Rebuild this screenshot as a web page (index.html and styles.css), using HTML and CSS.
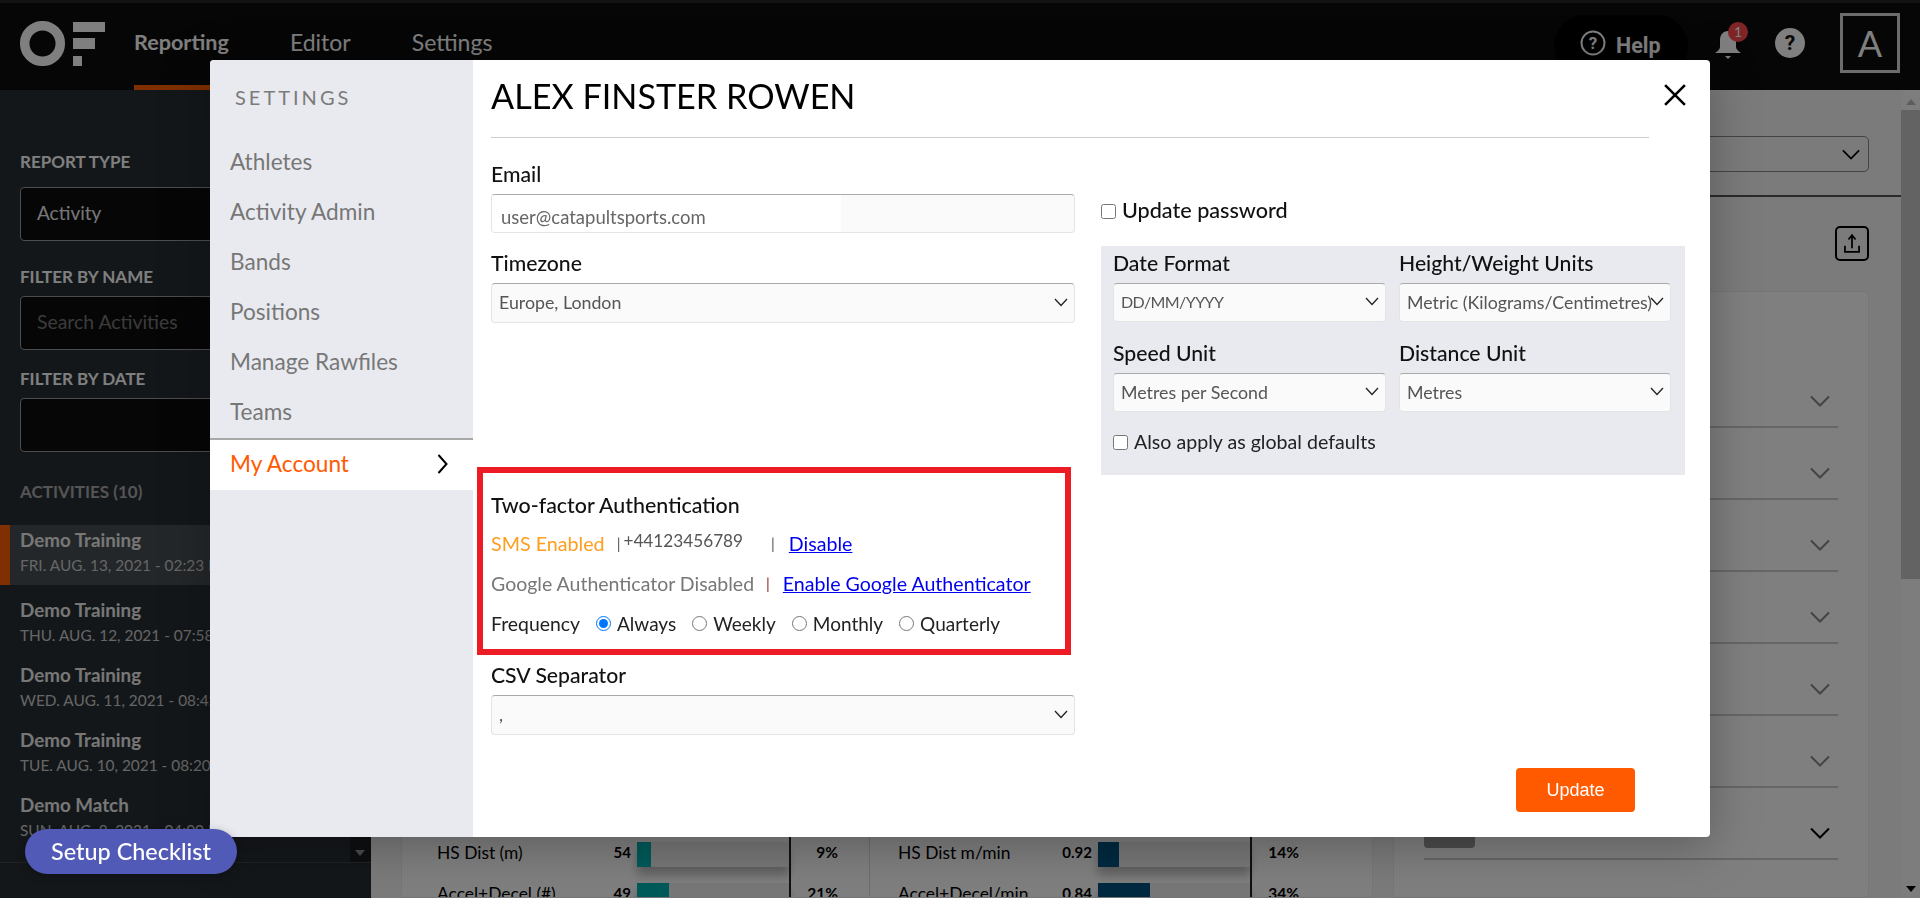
FILE: index.html
```html
<!DOCTYPE html>
<html lang="en">
<head>
<meta charset="utf-8">
<title>Settings - My Account</title>
<link rel="stylesheet" href="styles.css">
</head>
<body>
<svg class="defs" width="0" height="0" aria-hidden="true">
  <symbol id="chev" viewBox="0 0 14 9"><path d="M1 1l6 6.5L13 1" fill="none" stroke="currentColor" stroke-width="1.3"/></symbol>
  <symbol id="chev-big" viewBox="0 0 20 12"><path d="M1 1.5l9 9 9-9" fill="none" stroke="currentColor" stroke-width="2"/></symbol>
</svg>
<div class="app">
  <header class="topbar">
    <svg class="logo" viewBox="0 0 85 45" width="85" height="45" aria-label="OF">
      <circle cx="22.5" cy="22.5" r="17.8" fill="none" stroke="#fff" stroke-width="9.5"/>
      <rect x="53" y="1" width="32" height="10" fill="#fff"/>
      <rect x="53" y="17" width="22" height="11" fill="#fff"/>
      <rect x="53" y="35" width="9" height="10" fill="#fff"/>
    </svg>
    <nav class="nav">
      <a class="nav-item nav-active">Reporting</a>
      <a class="nav-item">Editor</a>
      <a class="nav-item">Settings</a>
    </nav>
    <div class="top-actions">
      <div class="help-pill">
        <svg viewBox="0 0 26 26" width="26" height="26"><circle cx="13" cy="13" r="11.5" fill="none" stroke="#fff" stroke-width="2"/><text x="13" y="19" text-anchor="middle" class="help-q">?</text></svg>
        <span>Help</span>
      </div>
      <div class="bell">
        <svg viewBox="0 0 26 32" width="26" height="32"><path d="M13 3c-5 0-8 4-8 9v7c0 2-2 4-5 6h26c-3-2-5-4-5-6v-7c0-5-3-9-8-9z" fill="#fff"/><path d="M10 28h6l-3 3z" fill="#fff"/></svg>
        <span class="badge">1</span>
      </div>
      <div class="q-circle">?</div>
      <div class="avatar">A</div>
    </div>
  </header>
  <div class="body">
    <aside class="sidebar">
      <div class="side-form">
        <div class="side-label side-label-first">REPORT TYPE</div>
        <div class="side-input">Activity</div>
        <div class="side-label">FILTER BY NAME</div>
        <div class="side-input side-placeholder">Search Activities</div>
        <div class="side-label">FILTER BY DATE</div>
        <div class="side-input"></div>
        <div class="side-heading">ACTIVITIES (10)</div>
      </div>
      <div class="list-wrap">
        <ul class="list">
          <li class="activity activity-active"><b>Demo Training</b><span>FRI. AUG. 13, 2021 - 02:23 PM</span></li>
          <li class="activity"><b>Demo Training</b><span>THU. AUG. 12, 2021 - 07:58 AM</span></li>
          <li class="activity"><b>Demo Training</b><span>WED. AUG. 11, 2021 - 08:42 AM</span></li>
          <li class="activity"><b>Demo Training</b><span>TUE. AUG. 10, 2021 - 08:20 AM</span></li>
          <li class="activity"><b>Demo Match</b><span>SUN. AUG. 8, 2021 - 04:00 PM</span></li>
        </ul>
        <div class="side-scroll"><i class="tri-down"></i></div>
      </div>
    </aside>
    <main class="main">
      <div class="page">
        <div class="filter-row"><div class="filter-select"><svg class="fchev" width="18" height="11"><use href="#chev-big"/></svg></div></div>
        <div class="export-row">
          <div class="export">
            <svg viewBox="0 0 34 35" width="34" height="35"><path d="M17 9v14M13 13l4-5 4 5M9 20v7h16v-7" fill="none" stroke="#000" stroke-width="2"/></svg>
          </div>
        </div>
        <div class="cards">
          <section class="card card-stats">
            <div class="stat-row">
              <div class="half half-l"><span class="s-label">HS Dist (m)</span><span class="s-value">54</span><div class="bar"><i class="fill fill-teal" style="width:9%"></i></div><span class="s-pct">9%</span></div>
              <div class="half half-r"><span class="s-label">HS Dist m/min</span><span class="s-value">0.92</span><div class="bar"><i class="fill fill-navy" style="width:14%"></i></div><span class="s-pct">14%</span></div>
            </div>
            <div class="stat-row">
              <div class="half half-l"><span class="s-label">Accel+Decel (#)</span><span class="s-value">49</span><div class="bar"><i class="fill fill-teal" style="width:21%"></i></div><span class="s-pct">21%</span></div>
              <div class="half half-r"><span class="s-label">Accel+Decel/min</span><span class="s-value">0.84</span><div class="bar"><i class="fill fill-navy" style="width:34%"></i></div><span class="s-pct">34%</span></div>
            </div>
          </section>
          <section class="card card-acc">
            <div class="acc"><svg width="20" height="12"><use href="#chev-big"/></svg></div>
            <div class="acc"><svg width="20" height="12"><use href="#chev-big"/></svg></div>
            <div class="acc"><svg width="20" height="12"><use href="#chev-big"/></svg></div>
            <div class="acc"><svg width="20" height="12"><use href="#chev-big"/></svg></div>
            <div class="acc"><svg width="20" height="12"><use href="#chev-big"/></svg></div>
            <div class="acc"><svg width="20" height="12"><use href="#chev-big"/></svg></div>
            <div class="acc acc-last"><span class="chip"></span><span class="acc-num">20</span><svg width="20" height="12"><use href="#chev-big"/></svg></div>
          </section>
        </div>
      </div>
      <div class="scrollbar">
        <i class="tri-up"></i>
        <div class="thumb"></div>
        <i class="tri-down2"></i>
      </div>
    </main>
  </div>
</div>

<div class="backdrop"></div>

<div class="modal">
  <aside class="menu">
    <div class="menu-title">SETTINGS</div>
    <a class="menu-item">Athletes</a>
    <a class="menu-item">Activity Admin</a>
    <a class="menu-item">Bands</a>
    <a class="menu-item">Positions</a>
    <a class="menu-item">Manage Rawfiles</a>
    <a class="menu-item">Teams</a>
    <a class="menu-item menu-active">My Account
      <svg viewBox="0 0 11 20" width="11" height="20"><path d="M1.5 1l8 9-8 9" fill="none" stroke="#000" stroke-width="2"/></svg>
    </a>
  </aside>
  <div class="content">
    <svg class="close" viewBox="0 0 20 20" width="22" height="22"><path d="M1 1l18 18M19 1L1 19" stroke="#000" stroke-width="2.4" fill="none"/></svg>
    <h1 class="title">ALEX FINSTER ROWEN</h1>
    <div class="columns">
      <div class="col-left">
        <label class="f-label">Email</label>
        <div class="email-box"><span class="email-fill">user@catapultsports.com</span></div>
        <label class="f-label f-label-gap">Timezone</label>
        <div class="select select-wide"><span>Europe, London</span><svg width="14" height="9"><use href="#chev"/></svg></div>

        <div class="tfa">
          <div class="tfa-title">Two-factor Authentication</div>
          <div class="tfa-line tfa-sms">
            <span class="sms">SMS Enabled</span><span class="pipe pipe-a">|</span><span class="phone">+44123456789</span><span class="pipe pipe-b">|</span><a class="link link-disable" href="#">Disable</a>
          </div>
          <div class="tfa-line">
            <span class="ga">Google Authenticator Disabled</span><span class="pipe pipe-c">|</span><a class="link" href="#">Enable Google Authenticator</a>
          </div>
          <div class="tfa-line freq">
            <span class="freq-label">Frequency</span>
            <label class="opt"><input type="radio" name="freq" checked>Always</label>
            <label class="opt"><input type="radio" name="freq">Weekly</label>
            <label class="opt"><input type="radio" name="freq">Monthly</label>
            <label class="opt"><input type="radio" name="freq">Quarterly</label>
          </div>
        </div>

        <label class="f-label f-label-csv">CSV Separator</label>
        <div class="select select-wide"><span>,</span><svg width="14" height="9"><use href="#chev"/></svg></div>
      </div>
      <div class="col-right">
        <label class="pw-row"><input type="checkbox">Update password</label>
        <div class="prefs">
          <div class="prefs-grid">
            <div><label class="f-label">Date Format</label><div class="select select-date"><span>DD/MM/YYYY</span><svg width="14" height="9"><use href="#chev"/></svg></div></div>
            <div><label class="f-label">Height/Weight Units</label><div class="select"><span>Metric (Kilograms/Centimetres)</span><svg width="14" height="9"><use href="#chev"/></svg></div></div>
            <div><label class="f-label">Speed Unit</label><div class="select"><span>Metres per Second</span><svg width="14" height="9"><use href="#chev"/></svg></div></div>
            <div><label class="f-label">Distance Unit</label><div class="select"><span>Metres</span><svg width="14" height="9"><use href="#chev"/></svg></div></div>
          </div>
          <label class="global"><input type="checkbox">Also apply as global defaults</label>
        </div>
      </div>
    </div>
    <div class="footer"><button class="update">Update</button></div>
  </div>
</div>

<button class="checklist">Setup Checklist</button>
</body>
</html>
```

FILE: styles.css
```css
* { box-sizing: border-box; }
html, body { margin: 0; height: 898px; overflow: hidden; }
body { font-family: "Lato", "Liberation Sans", sans-serif; color: #111; background: #fff; }
.defs { position: absolute; }
ul { list-style: none; margin: 0; padding: 0; }
a { text-decoration: none; }

.app { width: 1920px; height: 898px; display: flex; flex-direction: column; }

/* top bar */
.topbar { height: 90px; flex: none; display: flex; align-items: stretch; background: #0c0c0c; border-top: 3px solid #262626; padding: 0 20px; color: #fff; }
.logo { margin-top: 18px; flex: none; }
.nav { display: flex; gap: 61px; margin-left: 29px; font-size: 23px; }
.nav-item { display: block; color: #fff; padding-top: 25px; height: 87px; border-bottom: 5px solid transparent; }
.nav-active { font-size: 21.6px; font-weight: 700; padding-top: 26px; border-bottom-color: #ff5f00; }
.top-actions { margin-left: auto; display: flex; align-items: flex-start; }
.help-pill { width: 134px; height: 62px; margin-top: 12px; background: #000; border-radius: 31px; display: flex; align-items: flex-start; padding: 15px 0 0 26px; gap: 10px; font: 700 21.5px/31px "Roboto", sans-serif; }
.help-q { font: 700 17px "Roboto", sans-serif; fill: #fff; }
.bell { position: relative; margin: 25px 0 0 27px; width: 26px; height: 32px; }
.badge { position: absolute; left: 13px; top: -6px; width: 20px; height: 20px; border-radius: 50%; background: #ff4a4f; color: #fff; font-size: 14px; line-height: 20px; text-align: center; }
.q-circle { width: 30px; height: 30px; margin: 25px 0 0 34px; border-radius: 50%; background: #fff; color: #0c0c0c; font: 700 21px/30px "Roboto", sans-serif; text-align: center; }
.avatar { width: 60px; height: 60px; margin: 10px 0 0 35px; border: 3px solid #d8d8d8; color: #fff; font: 400 36px/54px "Lato", sans-serif; text-align: center; }

.body { flex: 1; min-height: 0; display: flex; }

/* sidebar */
.sidebar { width: 371px; flex: none; background: #282f35; display: flex; flex-direction: column; overflow: hidden; }
.side-form { padding: 63px 0 0 20px; }
.side-label { font-size: 17px; font-weight: 700; line-height: 18px; color: #fff; margin: 27px 0 10px; white-space: nowrap; }
.side-label-first { margin: 0 0 16px; }
.side-input { width: 331px; height: 54px; background: #0c0c0c; border: 1px solid #9a9a9a; border-radius: 4px; padding-left: 16px; font-size: 19px; line-height: 50px; color: #eee; }
.side-placeholder { font-size: 19.4px; color: #777; }
.side-input + .side-label + .side-input + .side-label { margin-top: 20px; }
.side-heading { margin-top: 31px; font-size: 17px; font-weight: 700; line-height: 18px; color: #aaa; }
.list-wrap { margin-top: 24px; height: 338px; flex: none; display: flex; border-bottom: 1px solid #444; }
.list { flex: 1; overflow: hidden; }
.activity { height: 65px; padding: 5px 0 0 20px; display: flex; flex-direction: column; gap: 5px; white-space: nowrap; color: #fff; }
.activity b { font-size: 18.8px; line-height: 20px; color: #eee; }
.activity span { font-size: 15.4px; line-height: 20px; color: #ccc; }
.activity-active { height: 60px; margin-bottom: 10px; background: #484e53; border-left: 10px solid #ff5f00; padding-left: 10px; }
.side-scroll { width: 21px; flex: none; background: #1c1f22; position: relative; }
.tri-down { position: absolute; left: 5px; bottom: 6px; border: 5px solid transparent; border-top: 6px solid #999; border-bottom: 0; }

/* main */
.main { flex: 1; min-width: 0; display: flex; background: #f6f6f6; }
.page { flex: 1; min-width: 0; display: flex; flex-direction: column; }
.filter-row { padding: 46px 32px 23px 0; border-bottom: 2px solid #555; display: flex; justify-content: flex-end; }
.filter-select { width: 500px; height: 36px; border: 1px solid #888; border-radius: 5px; display: flex; align-items: center; justify-content: flex-end; padding-right: 8px; }
.fchev { color: #000; }
.export-row { padding: 29px 32px 0 0; display: flex; justify-content: flex-end; }
.export { width: 34px; height: 35px; border: 2px solid #000; border-radius: 5px; display: flex; align-items: center; justify-content: center; }
.cards { margin: 30px 32px 0 30px; display: grid; grid-template-columns: 972px 476px; gap: 20px; flex: 1; min-height: 0; }
.card { background: #fff; border: 1px solid #ececec; border-radius: 4px; overflow: hidden; }
.card-stats { padding-top: 540px; }
.stat-row { display: grid; grid-template-columns: 468px 504px; height: 41px; }
.half { display: flex; align-items: flex-start; font-size: 17.4px; line-height: 41px; color: #000; }
.half-l { padding-left: 35px; border-right: 1px solid #dcdcdc; }
.half-r { padding-left: 28px; }
.s-label { width: 160px; flex: none; white-space: nowrap; }
.s-value { width: 34px; flex: none; font-size: 15px; font-weight: 700; text-align: right; }
.bar { width: 152px; height: 25px; margin: 10px 0 0 6px; flex: none; background: #eee; box-shadow: 0 8px 10px rgba(0,0,0,.25); }
.fill { display: block; height: 100%; }
.fill-teal { background: #00b4b4; }
.fill-navy { background: #005480; }
.s-pct { width: 49px; height: 41px; flex: none; border-left: 2px solid #222; font-size: 15.5px; font-weight: 700; text-align: right; }
.card-acc { padding: 64px 30px 0; }
.acc { height: 72px; border-bottom: 2px solid #ccc; display: flex; align-items: center; justify-content: flex-end; padding: 20px 8px 0 0; color: #888; }
.acc-last { color: #000; position: relative; }
.chip { position: absolute; left: 0; bottom: 10px; width: 51px; height: 34px; background: #999; border-radius: 4px; }
.acc-num { position: absolute; left: 196px; bottom: 24px; font-size: 17px; font-weight: 700; line-height: 20px; color: #000; }
.scrollbar { width: 19px; flex: none; background: #fafafa; display: flex; flex-direction: column; align-items: center; }
.thumb { width: 19px; height: 469px; margin-top: 5px; background: #c6c6c6; }
.tri-up { margin-top: 9px; border: 5px solid transparent; border-bottom: 6px solid #bbb; border-top: 0; }
.tri-down2 { margin-top: auto; margin-bottom: 6px; border: 5px solid transparent; border-top: 6px solid #000; border-bottom: 0; }

/* overlay */
.backdrop { position: fixed; inset: 0; background: rgba(0,0,0,.5); z-index: 10; }
.modal { position: fixed; left: 210px; top: 60px; width: 1500px; height: 777px; z-index: 11; display: flex; background: #fff; border-radius: 4px; overflow: hidden; filter: drop-shadow(0 8px 24px rgba(0,0,0,.28)); }

.menu { width: 263px; flex: none; background: #e9eaef; display: flex; flex-direction: column; }
.menu-title { padding: 25px 0 0 25px; height: 77px; font-size: 20px; letter-spacing: 3px; line-height: 24px; color: #7b7b7b; }
.menu-item { display: block; height: 50px; padding-left: 20px; font-size: 22.6px; line-height: 49px; color: #777; }
.menu-active { height: 52px; margin-top: 1px; padding-right: 25px; padding-bottom: 3px; background: #fff; color: #ff5a00; border-top: 2px solid #a8a8a8; display: flex; align-items: center; justify-content: space-between; }

.content { flex: 1; min-width: 0; position: relative; padding: 0 25px 0 18px; display: flex; flex-direction: column; }
.close { position: absolute; right: 24px; top: 24px; }
.title { margin: 0 36px 0 0; padding: 14px 0 19px; height: 78px; font-size: 34.2px; font-weight: 400; line-height: 44px; color: #000; border-bottom: 1px solid #ccc; }
.columns { display: grid; grid-template-columns: 584px 584px; gap: 26px; }
.col-left { padding-top: 25px; }
.f-label { display: block; font-size: 21.2px; font-weight: 500; line-height: 22px; margin-bottom: 9px; color: #111; white-space: nowrap; }
.f-label-gap { margin-top: 19px; }
.f-label-csv { margin-top: 9px; }
.email-box { height: 39px; background: #fafafa; border: 1px solid #e4e4e4; border-top-color: #aaa; border-radius: 4px; overflow: hidden; }
.email-fill { display: block; width: 349px; height: 38px; padding: 8px 0 0 9px; background: #fff; font-size: 18.5px; line-height: 28px; color: #666; }
.select { height: 39px; display: flex; align-items: center; background: #fafafa; border: 1px solid #e4e4e4; border-top-color: #aaa; border-radius: 4px; padding: 0 6px 2px 7px; font-size: 17.8px; color: #555; }
.select span { flex: 1; min-width: 0; white-space: nowrap; }
.select svg { flex: none; color: #222; }
.select-wide { height: 40px; }
.select-date { font-size: 16px; letter-spacing: -.6px; }

.tfa { margin: 144px 0 0 -14px; width: 594px; height: 188px; border: 6px solid #ed1c24; padding: 21px 0 0 8px; }
.tfa-title { font-size: 21.4px; font-weight: 500; line-height: 22px; color: #111; white-space: nowrap; }
.tfa-line { display: flex; align-items: center; height: 24px; margin-top: 16px; font-size: 19px; white-space: nowrap; }
.tfa-sms { margin-top: 15px; }
.sms { color: #ff9d1e; font-size: 19.7px; }
.ga { color: #777; font-size: 19.5px; }
.pipe { color: #555; font-size: 15px; }
.pipe-a { margin-left: 12px; }
.pipe-b { margin-left: 28px; }
.pipe-c { margin-left: 12px; color: #8a1c1c; }
.phone { margin: -6px 0 0 3px; color: #555; font-size: 17.2px; }
.link { color: #0000ee; font-size: 19.6px; text-decoration: underline; margin-left: 13px; }
.link-disable { margin-left: 14px; }
.freq-label { color: #222; font-size: 19.4px; }
.opt { display: flex; align-items: center; color: #222; margin-left: 16px; }
.opt input { margin: 0 6px 0 0; width: 15px; height: 15px; }

.pw-row { display: flex; align-items: center; height: 22px; margin-top: 61px; font-size: 21.6px; font-weight: 500; color: #111; }
.pw-row input { margin: 3px 6px 0 0; width: 15px; height: 15px; }
.prefs { margin-top: 25px; height: 229px; background: #e9eaef; padding: 6px 14px 0 12px; }
.prefs-grid { display: grid; grid-template-columns: 273px 272px; column-gap: 13px; row-gap: 20px; }
.global { display: flex; align-items: center; height: 22px; margin-top: 18px; font-size: 19.6px; color: #222; }
.global input { margin: 2px 6px 0 0; width: 15px; height: 15px; }

.footer { margin-top: auto; padding: 0 50px 25px 0; display: flex; justify-content: flex-end; }
.update { width: 119px; height: 44px; border: 0; border-radius: 4px; background: #ff5a00; color: #fff; font: 18px/1 "Liberation Sans", sans-serif; }

.checklist { position: fixed; left: 25px; top: 829px; width: 212px; height: 45px; z-index: 12; border: 0; border-radius: 23px; background: #525ab8; color: #fff; font: 500 23.4px/1 "Lato", sans-serif; box-shadow: 0 2px 8px rgba(0,0,0,.25); }
```
